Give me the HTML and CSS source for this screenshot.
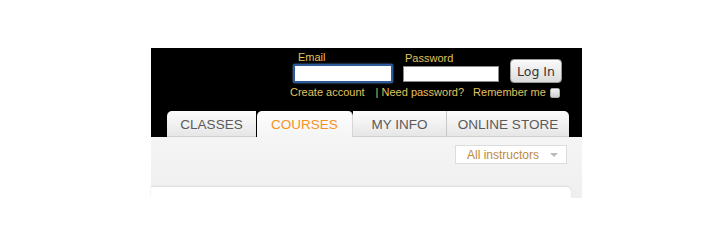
FILE: index.html
```
<!DOCTYPE html>
<html>
<head>
	<title>Courses</title>
	<link rel="stylesheet" href="styles.css">
</head>
<body>
	<div class="page">
		<div class="header">
			<form class="login">
				<div class="login_row">
					<div class="field email">
						<label>Email</label>
						<input type="text" class="focused">
					</div>
					<div class="field password">
						<label>Password</label>
						<input type="password">
					</div>
					<button type="button" class="btn">Log In</button>
				</div>
				<div class="login_links">
					<a class="create">Create account</a>
					<a class="need">| Need password?</a>
					<span class="remember">Remember me</span>
					<span class="check"></span>
				</div>
			</form>
			<ul class="tabs">
				<li class="tab first">CLASSES</li>
				<li class="tab active">COURSES</li>
				<li class="tab">MY INFO</li>
				<li class="tab last">ONLINE STORE</li>
			</ul>
		</div>
		<div class="panel">
			<div class="toolbar">
				<div class="select">
					<span>All instructors</span>
					<span class="arrow"></span>
				</div>
			</div>
			<div class="card"></div>
		</div>
	</div>
</body>
</html>
```

FILE: styles.css
```
* {
	margin: 0;
	padding: 0;
	box-sizing: border-box;
}
body {
	background: #fff;
	font-family: "Liberation Sans", Arial, sans-serif;
}
.page {
	width: 431px;
	margin: 48px 0 0 151px;
}

/* header */
.header {
	background: #000;
	height: 89px;
	display: flex;
	flex-direction: column;
	justify-content: space-between;
}
.login {
	align-self: flex-end;
	width: 272px;
	margin-right: 20px;
	padding-top: 3px;
	color: #e2c15e;
	font-size: 11px;
}
.login_row {
	display: flex;
	align-items: flex-end;
	padding-left: 3px;
}
.field {
	display: flex;
	flex-direction: column;
}
.field label {
	line-height: 12px;
}
.email label {
	padding-left: 5px;
}
.email input {
	width: 100px;
	height: 19px;
	border: 2px solid #2d5b9a;
	border-radius: 2px;
	box-shadow: 0 0 2px #6f9ad6;
	background: #fff;
	margin-top: 1px;
}
.password {
	margin-left: 10px;
}
.password label {
	padding-left: 2px;
}
.password input {
	width: 96px;
	height: 16px;
	border: 1px solid #8a8a8a;
	background: #fff;
	margin: 2px 0 1px;
}
.btn {
	margin-left: 11px;
	width: 52px;
	height: 24px;
	border: 1px solid #999;
	border-radius: 4px;
	background: linear-gradient(#fafafa, #dcdcdc);
	font-family: "DejaVu Sans", sans-serif;
	font-size: 12.5px;
	color: #333;
}
.login_links {
	display: flex;
	align-items: center;
	white-space: nowrap;
	margin-top: 2px;
}
.create {
	margin-right: 11px;
}
.need {
	margin-right: 9px;
}
.check {
	flex-shrink: 0;
	width: 10px;
	height: 10px;
	margin: 3px 0 0 4px;
	background: linear-gradient(#f2f2f2, #cfcfcf);
	border: 1px solid #aaa;
	border-radius: 2px;
}

/* tabs */
.tabs {
	list-style: none;
	display: flex;
	margin-left: 16px;
	height: 26px;
}
.tab {
	height: 26px;
	padding-top: 6px;
	font-size: 13.5px;
	color: #5a5a5a;
	text-align: center;
	background: linear-gradient(#fdfdfd, #e6e6e6);
	border-right: 1px solid #c8c8c8;
	border-bottom: 1px solid #cfcfcf;
}
.tab:nth-child(1) { width: 89px; margin-right: 1px; }
.tab:nth-child(2) { width: 96px; }
.tab:nth-child(3) { width: 94px; }
.tab:nth-child(4) { width: 122px; border-right: none; }
.first {
	border-radius: 5px 0 0 0;
	border-right: none;
}
.last {
	border-radius: 0 5px 0 0;
}
.tab.active {
	background: linear-gradient(#fdfdfd, #f5f5f5);
	color: #f7911e;
	border-radius: 5px 5px 0 0;
	border-bottom: none;
	border-right: 1px solid #d6d6d6;
}

/* panel */
.panel {
	background: linear-gradient(#f5f5f5, #efefef);
	padding: 8px 11px 0 0;
}
.toolbar {
	display: flex;
	justify-content: flex-end;
	height: 42px;
}
.select {
	width: 112px;
	height: 19px;
	margin-right: 4px;
	background: #fff;
	border: 1px solid #ddd;
	display: flex;
	align-items: center;
	justify-content: space-between;
	padding: 0 8px 0 11px;
	font-size: 12px;
	color: #c3883a;
}
.arrow {
	width: 0;
	height: 0;
	border-left: 4px solid transparent;
	border-right: 4px solid transparent;
	border-top: 4px solid #bbb;
}
.card {
	height: 11px;
	background: #fff;
	border-radius: 0 5px 0 0;
	box-shadow: 0 -1px 2px #ddd;
}
```
